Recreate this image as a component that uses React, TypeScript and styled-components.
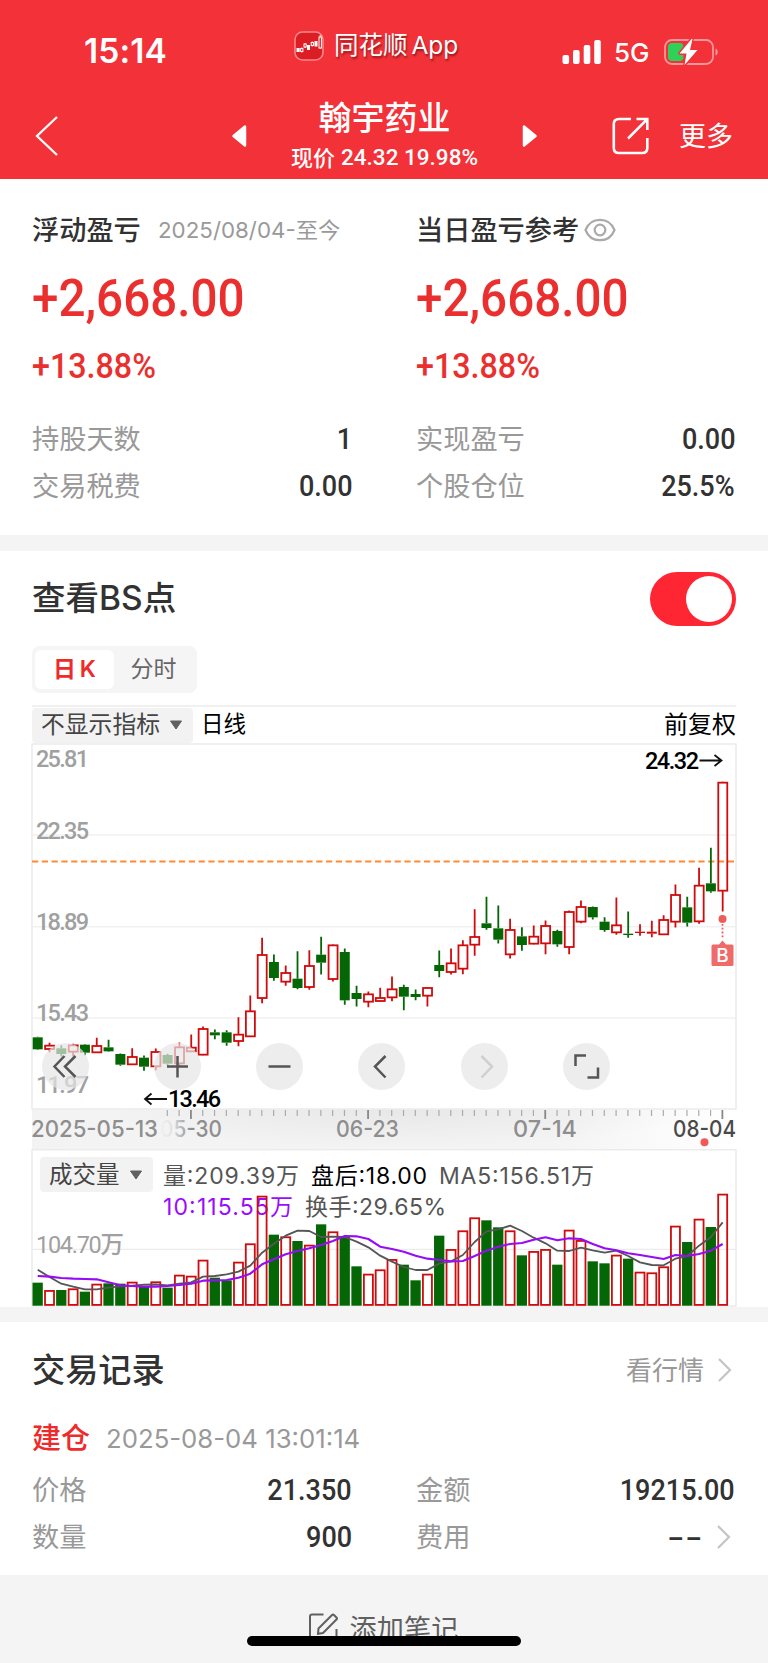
import React from "react";
import styled, { createGlobalStyle } from "styled-components";

const CJK = `"Noto Sans CJK SC", sans-serif`;
const UI = `Inter, "Noto Sans CJK SC", sans-serif`;
const DIN = `Roboto, "Noto Sans CJK SC", sans-serif`;

const RED = "#ea302f";
const UP = "#cf0b0d";
const DOWN = "#046604";

const GlobalStyle = createGlobalStyle`
  * { box-sizing: border-box; }
  body { margin: 0; background: #f4f4f4; font-family: ${CJK}; color: #323232; }
`;

const Screen = styled.main`
  position: relative;
  width: 768px;
  height: 1663px;
  overflow: hidden;
  background: #f4f4f4;
`;

/* ---------- text ---------- */

const Label = styled.span<{ $size: number; $color?: string; $weight?: number; $lift?: number }>`
  font-family: ${CJK};
  font-size: ${(p) => p.$size}px;
  font-weight: ${(p) => p.$weight ?? 400};
  color: ${(p) => p.$color ?? "#999"};
  line-height: 1;
  padding-bottom: ${(p) => p.$lift ?? 2}px;
  white-space: nowrap;
`;

const Num = styled.span<{
  $size: number;
  $color?: string;
  $weight?: number;
  $squeeze?: number;
  $right?: boolean;
  $ui?: boolean;
}>`
  display: inline-block;
  font-family: ${(p) => (p.$ui ? UI : DIN)};
  font-size: ${(p) => p.$size}px;
  font-weight: ${(p) => p.$weight ?? 500};
  color: ${(p) => p.$color ?? "#323232"};
  line-height: 1;
  white-space: nowrap;
  transform: scaleX(${(p) => p.$squeeze ?? 0.915});
  transform-origin: ${(p) => (p.$right ? "right" : "left")} center;
`;

/* ---------- header ---------- */

const Header = styled.header`
  height: 179px;
  background: #f23138;
  color: #fff;
`;

const StatusBar = styled.div`
  display: flex;
  align-items: center;
  height: 90px;
  padding: 13px 48px 0 84px;
`;

const Clock = styled.span`
  font: 600 33.5px/1 ${UI};
  letter-spacing: 0.1px;
  width: 210px;
`;

const AppName = styled.div`
  display: flex;
  align-items: center;
  gap: 10px;
  width: 268px;
  margin-top: -12px;
  font: 400 24.5px/1 ${UI};
  word-spacing: -3px;
  text-shadow: 1px 2px 2px rgba(60, 0, 0, 0.5);
`;

const Network = styled.span`
  font: 450 26px/1 ${UI};
  width: 38px;
  margin: 2px 12px 0 12px;
`;

const NavBar = styled.div`
  display: flex;
  align-items: center;
  height: 89px;
  padding: 2px 35px 0 34px;
`;

const Back = styled.div`
  width: 197px;
  display: flex;
`;

const TitleBlock = styled.div`
  width: 275px;
  height: 89px;
  display: flex;
  flex-direction: column;
  align-items: center;
  padding-top: 5px;
`;

const TitleName = styled.h1`
  margin: 0;
  font: 500 33px/40px ${CJK};
`;

const Quote = styled.div`
  display: flex;
  align-items: center;
  height: 42px;
  gap: 6px;
`;

const NavActions = styled.div`
  flex: 1;
  display: flex;
  align-items: center;
  justify-content: flex-end;
  gap: 30px;
`;

/* ---------- shared sections ---------- */

const Panel = styled.section<{ $h: number }>`
  height: ${(p) => p.$h}px;
  background: #fff;
`;

const Gap = styled.div<{ $h: number }>`
  height: ${(p) => p.$h}px;
  background: #f4f4f4;
`;

const Columns = styled.div<{ $top: number }>`
  display: grid;
  grid-template-columns: 320px 319px;
  column-gap: 64px;
  padding: ${(p) => p.$top}px 32px 0;
`;

const Line = styled.div<{ $h: number; $gap?: number; $between?: boolean; $drop?: number }>`
  display: flex;
  align-items: center;
  height: ${(p) => p.$h}px;
  padding-top: ${(p) => p.$drop ?? 0}px;
  gap: ${(p) => p.$gap ?? 0}px;
  justify-content: ${(p) => (p.$between ? "space-between" : "flex-start")};
`;

const Padded = styled.div<{ $top?: number }>`
  padding: ${(p) => p.$top ?? 0}px 32px 0;
`;

const Trailing = styled.span`
  display: inline-flex;
  align-items: center;
  gap: 11px;
  margin-right: 3px;
`;

/* ---------- chart panel ---------- */

const Toggle = styled.div`
  width: 86px;
  height: 54px;
  padding: 4px;
  border-radius: 27px;
  background: #ff2634;
  display: flex;
  justify-content: flex-end;
  &::after {
    content: "";
    width: 46px;
    height: 46px;
    border-radius: 50%;
    background: #fff;
  }
`;

const Tabs = styled.div`
  display: inline-flex;
  width: 165px;
  height: 47px;
  padding: 4px 3px;
  border-radius: 8px;
  background: #f5f5f5;
`;

const Tab = styled.div<{ $active?: boolean }>`
  width: ${(p) => (p.$active ? 79 : 79)}px;
  display: flex;
  align-items: center;
  justify-content: center;
  border-radius: 6px;
  word-spacing: -2px;
  font: ${(p) => (p.$active ? 600 : 400)} 23px/1 ${UI};
  color: ${(p) => (p.$active ? "#ee2a2a" : "#666")};
  background: ${(p) => (p.$active ? "#fff" : "transparent")};
`;

const IndicatorRow = styled.div`
  display: flex;
  align-items: center;
  height: 38px;
  margin: 12px 32px 0;
  border-top: 2px solid #f0f0f0;
`;

const LineName = styled.div`
  flex: 1;
  display: flex;
  margin-left: 8px;
`;

const Picker = styled.div<{ $w: number }>`
  display: flex;
  align-items: center;
  justify-content: space-between;
  width: ${(p) => p.$w}px;
  height: 35px;
  padding: 0 10px 0 9px;
  border-radius: 4px;
  background: #f2f2f2;
`;

const Stage = styled.div`
  position: relative;
  svg {
    display: block;
  }
`;

const Controls = styled.div`
  position: absolute;
  left: 41.500px;
  top: 300px;
  display: flex;
  gap: 55.3px;
`;

const Round = styled.div`
  width: 47px;
  height: 47px;
  border-radius: 50%;
  background: rgba(229, 229, 229, 0.7);
  display: flex;
  align-items: center;
  justify-content: center;
  &:first-child {
    margin-right: 10px;
  }
`;

const VolumePicker = styled.div`
  position: absolute;
  left: 40px;
  top: 8px;
`;

/* ---------- footer ---------- */

const Footer = styled.footer`
  display: flex;
  justify-content: center;
  align-items: center;
  gap: 10px;
  height: 88px;
  padding: 20px 2px 0 0;
`;

const HomeBar = styled.div`
  position: absolute;
  left: 247px;
  top: 1636px;
  width: 274px;
  height: 10px;
  border-radius: 5px;
  background: #000;
`;

/* ---------- data ---------- */

type Candle = ["r" | "g", number, number, number, number];

/* colour, high, body top, body bottom, low: thirds of a pixel below the plot's y=900 */
const candles: Candle[] = [
  ["g", 412, 412, 448, 448], ["r", 430, 437, 447, 455], ["g", 437, 445, 462, 468], ["r", 433, 436, 455, 468],
  ["g", 434, 434, 458, 464], ["r", 415, 438, 457, 457], ["g", 421, 442, 454, 454], ["g", 462, 462, 494, 496],
  ["r", 446, 471, 493, 493], ["g", 468, 473, 500, 511], ["r", 447, 456, 499, 509], ["g", 463, 465, 491, 495],
  ["r", 429, 442, 490, 496], ["r", 405, 443, 454, 454], ["r", 381, 387, 464, 464], ["g", 390, 397, 406, 416],
  ["g", 392, 397, 428, 436], ["r", 353, 404, 423, 437], ["r", 288, 334, 409, 409], ["r", 115, 165, 294, 308],
  ["g", 165, 186, 234, 241], ["r", 198, 219, 245, 256], ["g", 155, 236, 264, 266], ["r", 152, 198, 261, 268],
  ["g", 112, 164, 188, 222], ["r", 135, 136, 237, 243], ["g", 147, 156, 301, 313], ["g", 259, 279, 297, 318],
  ["r", 276, 283, 305, 320], ["r", 265, 294, 303, 303], ["r", 231, 268, 292, 302], ["g", 256, 261, 290, 329],
  ["g", 270, 282, 291, 299], ["r", 264, 264, 287, 318], ["g", 153, 195, 213, 230], ["r", 147, 190, 216, 222],
  ["r", 122, 136, 206, 221], ["r", 29, 111, 134, 166], ["g", -8, 70, 84, 88], ["g", 18, 85, 119, 129],
  ["r", 58, 90, 163, 174], ["g", 83, 109, 135, 151], ["r", 78, 110, 131, 131], ["r", 63, 78, 130, 161],
  ["g", 91, 93, 133, 139], ["r", 33, 36, 141, 161], ["r", 3, 21, 65, 68], ["g", 21, 21, 52, 57],
  ["g", 53, 65, 90, 94], ["r", -6, 76, 97, 103], ["g", 36, 101, 105, 112], ["r", 74, 95, 99, 106],
  ["r", 64, 95, 101, 110], ["r", 47, 60, 103, 103], ["r", -45, -15, 65, 81], ["g", -8, 22, 68, 78],
  ["r", -95, -43, 64, 70], ["g", -155, -50, -26, -23], ["r", -353, -352, -28, 33],
];

const volumes = [
  428, 451, 450, 446, 455, 432, 430, 431, 426, 441, 425, 443, 405, 408, 360, 413, 421, 366, 311, 168,
  284, 290, 303, 315, 253, 275, 291, 379, 402, 389, 358, 374, 421, 402, 287, 328, 272, 233, 241, 262,
  272, 346, 334, 328, 374, 270, 301, 364, 370, 345, 356, 396, 398, 380, 258, 306, 237, 261, 162,
];

const ma5 = [
  389, 411, 431, 440, 448, 448, 443, 439, 437, 434, 433, 436, 431, 427, 410, 408, 403, 395, 377, 338,
  311, 287, 272, 273, 291, 290, 291, 305, 322, 347, 365, 381, 390, 390, 371, 364, 345, 306, 274, 268,
  257, 273, 293, 310, 332, 333, 323, 331, 338, 332, 348, 367, 375, 376, 356, 348, 317, 291, 247,
];

const ma10 = [
  408, 410, 414, 416, 417, 418, 427, 436, 438, 440, 440, 438, 435, 431, 422, 421, 420, 413, 401, 373,
  358, 343, 333, 325, 315, 303, 288, 289, 297, 320, 327, 335, 347, 356, 360, 364, 363, 348, 332, 320,
  312, 309, 299, 292, 301, 295, 297, 312, 325, 331, 340, 345, 351, 357, 345, 348, 342, 332, 312,
];

const cx = (i: number) => 37.7 + 11.81 * i;
const BODY = 10;

/* ---------- small drawings ---------- */

const Caret = () => (
  <svg width="14" height="10" viewBox="0 0 14 10">
    <path d="M1.5 1h11L7 9z" fill="#606060" stroke="#606060" strokeLinejoin="round" />
  </svg>
);

const Chevron = () => (
  <svg width="18" height="26" viewBox="0 0 18 26">
    <path d="M4 2 15 13 4 24" fill="none" stroke="#c4c4c4" strokeWidth="2.2" />
  </svg>
);

const AppIcon = () => (
  <svg width="30" height="30" viewBox="0 0 30 30">
    <rect x="1" y="1" width="28" height="28" rx="7.5" fill="#dd1d24" stroke="#f8888b" strokeWidth="1.6" />
    <g fill="#fff">
      <rect x="2.5" y="17" width="3.2" height="4" />
      <rect x="13" y="14" width="3" height="5" />
      <rect x="20.5" y="10" width="3" height="5.5" />
    </g>
    <g fill="none" stroke="#fff">
      <path d="M7.8 16.5v5M11 12v5M18.2 10.5v5M26.2 4v14" />
      <rect x="6.7" y="17.5" width="2.2" height="3" fill="#dd1d24" />
      <rect x="10" y="13" width="2.2" height="3" fill="#dd1d24" />
      <rect x="17.2" y="11.5" width="2.2" height="3" fill="#dd1d24" />
      <rect x="25" y="6" width="2.4" height="11" fill="#dd1d24" />
    </g>
  </svg>
);

const Signal = () => (
  <svg width="40" height="26" viewBox="0 0 40 26" fill="#fff">
    <rect x="0.5" y="16" width="6.6" height="9" rx="2" />
    <rect x="11" y="11" width="6.6" height="14" rx="2" />
    <rect x="21.7" y="6" width="6.6" height="19" rx="2" />
    <rect x="32.2" y="1" width="6.6" height="24" rx="2" />
  </svg>
);

const Battery = () => (
  <svg width="56" height="28" viewBox="0 0 56 28">
    <rect x="1" y="2" width="48" height="24" rx="7" fill="none" stroke="#f9989b" strokeWidth="1.8" />
    <path d="M51.5 10.5c3 1 3 6 0 7z" fill="#f9989b" />
    <rect x="4" y="5" width="15.5" height="18" rx="4" fill="#30d158" />
    <path
      d="M27.5 1 15.500 15.500h7L20.500 27 33.500 12h-7.500L28.500 1z"
      fill="#fff" stroke="#f23138" strokeWidth="2.800" strokeLinejoin="round" paintOrder="stroke"
    />
  </svg>
);

const Eye = () => (
  <svg width="32" height="24" viewBox="0 0 32 24" fill="none" stroke="#aaa" strokeWidth="2.200">
    <path d="M1.500 12C4 5.500 9.500 1.800 16 1.800S28 5.500 30.500 12C28 18.500 22.500 22.200 16 22.200S4 18.500 1.500 12z" />
    <circle cx="16" cy="12" r="5.300" />
  </svg>
);

const Share = () => (
  <svg width="37" height="38" viewBox="0 0 37 38" fill="none" stroke="#fff" strokeWidth="2.600">
    <path d="M19 2H7Q1.800 2 1.800 7v24q0 5 5 5h23.500q5 0 5-5V21M24.500 2h10.800v11M35 2.300 16 21.500" />
  </svg>
);

const Note = () => (
  <svg width="32" height="34" viewBox="0 0 32 34" fill="none" stroke="#606060" strokeWidth="2">
    <path d="M15.500 2.500H4Q2 2.500 2 4.500V30q0 2 2 2h22.500q2 0 2-2V17" />
    <path d="M10.500 16.500 24.300 2.800q.7-.7 1.400 0l3 3q.7.7 0 1.400L15 21l-5 .8z" />
  </svg>
);

const Icon = ({ d, color = "#555" }: { d: string; color?: string }) => (
  <svg width="47" height="47" viewBox="0 0 47 47" fill="none" stroke={color} strokeWidth="2.500">
    <path d={d} />
  </svg>
);

/* ---------- charts ---------- */

type MarkProps = {
  x: number; y: number; len: number; children: string;
  size?: number; fill?: string; weight?: number; family?: string; squeeze?: boolean;
};

const Mark = ({ x, y, len, children, size = 23.5, fill = "#999", weight = 400, family = DIN, squeeze }: MarkProps) => (
  <text
    x={x} y={y} textLength={len} lengthAdjust={squeeze ? "spacingAndGlyphs" : "spacing"}
    fontFamily={family} fontSize={size} fontWeight={weight} fill={fill}
  >
    {children}
  </text>
);

const prices: [string, number][] = [
  ["25.81", 767], ["22.35", 838.5], ["18.89", 930], ["15.43", 1021], ["11.97", 1093],
];

const PriceChart = () => (
  <svg width="768" height="406" viewBox="0 743 768 406">
    <defs>
      <linearGradient id="axisFade">
        <stop offset="0" stopColor="#f3f3f3" />
        <stop offset="0.75" stopColor="#f4f4f4" />
        <stop offset="1" stopColor="#fff" />
      </linearGradient>
      <radialGradient id="axisShade" cx="0.5" cy="0" r="0.5" gradientTransform="translate(0 0) scale(1 2)">
        <stop offset="0" stopColor="#000" stopOpacity="0.05" />
        <stop offset="1" stopColor="#000" stopOpacity="0" />
      </radialGradient>
      <linearGradient id="dateFade">
        <stop offset="0" stopColor="#f3f3f3" />
        <stop offset="0.4" stopColor="#f3f3f3" stopOpacity="0.85" />
        <stop offset="1" stopColor="#f3f3f3" stopOpacity="0" />
      </linearGradient>
    </defs>
    <rect x="32" y="1109" width="704" height="40" fill="url(#axisFade)" />
    <rect x="100" y="1109" width="600" height="40" fill="url(#axisShade)" />
    {[835, 926.7, 1018].map((y) => (
      <path key={y} d={`M32 ${y}H736`} stroke="#f1f1f1" strokeWidth="1.500" />
    ))}
    <rect x="32" y="744" width="704" height="365" fill="none" stroke="#ebebeb" strokeWidth="1.500" />
    <path d="M32 861.500H736" stroke="#ff8a33" strokeWidth="2" strokeDasharray="6.200 3.600" />
    {prices.map(([t, y]) => (
      <Mark key={t} x={36} y={y} len={53} weight={500} fill="#a0a0a0">{t}</Mark>
    ))}
    {candles.map(([c, h, t, b, l], i) => {
      const x = cx(i);
      const [hi, top, bot, lo] = [h, t, b, l].map((v) => 900 + v / 3);
      const col = c === "r" ? UP : DOWN;
      const thin = bot - top < 2.5;
      return (
        <g key={i} stroke={col} strokeWidth="1.800">
          <path d={`M${x} ${hi - 0.5}V${top}M${x} ${bot}V${lo + 0.5}`} />
          {c === "g" || thin ? (
            <rect x={x - BODY / 2} y={top} width={BODY} height={Math.max(bot - top, 1.2)} fill={col} stroke="none" />
          ) : (
            <rect x={x - BODY / 2 + 0.6} y={top} width={BODY - 1} height={bot - top} fill="none" />
          )}
        </g>
      );
    })}
    <Mark x={645} y={769} len={54} fill="#000" weight={500}>24.32</Mark>
    <path d="M699.500 760.500H721M714.500 755l7 5.500-7 5.500" fill="none" stroke="#111" strokeWidth="1.800" />
    <Mark x={168} y={1107} len={53} fill="#000" weight={500}>13.46</Mark>
    <path d="M167 1099H145.500M151.500 1093.500l-6.500 5.500 6.500 5.500" fill="none" stroke="#111" strokeWidth="1.800" />
    <circle cx="722.500" cy="919" r="4" fill="#ee5b5b" />
    <path d="M722.500 924V938" stroke="#ee5b5b" strokeWidth="1.800" strokeDasharray="1.800 2" />
    <path d="M713 944.500h6l3.500-4 3.500 4h6q1.500 0 1.500 1.500v18.500q0 1.500-1.500 1.500h-19q-1.500 0-1.500-1.500V946q0-1.500 1.500-1.500z" fill="#f06a6a" />
    <text x="722.500" y="961.800" textAnchor="middle" fontFamily={UI} fontSize="19" fontWeight="500" fill="#fff">B</text>
    {candles.map((_, i) =>
      i < 11 ? null : (
        <path
          key={i}
          d={`M${cx(i) - 0.3} 1110v${[13, 28, 43, 58].includes(i) ? 9 : 6}`}
          stroke={[13, 28, 43, 58].includes(i) ? "#888" : "#aaa"}
          strokeWidth={[13, 28, 43, 58].includes(i) ? 1.8 : 1.2}
        />
      ),
    )}
    <Mark x={31} y={1136.5} len={127} family={UI} size={23} weight={500} fill="#8e8e8e" squeeze>2025-05-13</Mark>
    <Mark x={160} y={1136.5} len={62} family={UI} size={23} weight={500} fill="#8e8e8e" squeeze>05-30</Mark>
    <rect x="158" y="1118" width="33" height="30" fill="url(#dateFade)" />
    <Mark x={336} y={1136.5} len={63} family={UI} size={23} weight={500} fill="#8e8e8e" squeeze>06-23</Mark>
    <Mark x={513} y={1136.5} len={64} family={UI} size={23} weight={500} fill="#8e8e8e" squeeze>07-14</Mark>
    <Mark x={673} y={1136.5} len={63} family={UI} size={23} weight={500} fill="#4a4a4a" squeeze>08-04</Mark>
    <circle cx="704.500" cy="1142.300" r="4" fill="#f25a5a" />
  </svg>
);

const line = (v: number[]) => v.map((y, i) => `${i ? "L" : "M"}${cx(i)} ${1140 + y / 3}`).join("");

const VolumeChart = () => (
  <svg width="768" height="158" viewBox="0 1149 768 158">
    <rect x="32" y="1149.700" width="704" height="156.300" fill="none" stroke="#ebebeb" strokeWidth="1.500" />
    <path d="M32 1249.300H736" stroke="#ececec" strokeWidth="1.200" />
    <Mark x={36} y={1252.5} len={88} weight={450} fill="#a0a0a0">104.70万</Mark>
    <Mark x={163} y={1184} len={136} family={UI} size={23} fill="#555">量:209.39万</Mark>
    <Mark x={311} y={1184} len={116} family={UI} size={23} fill="#000">盘后:18.00</Mark>
    <Mark x={439} y={1184} len={155} family={UI} size={23} fill="#555">MA5:156.51万</Mark>
    <Mark x={163} y={1215} len={130} family={UI} size={23} fill="#9a0cff">10:115.55万</Mark>
    <Mark x={305} y={1215} len={141} family={UI} size={23} fill="#555">换手:29.65%</Mark>
    {volumes.map((v, i) => {
      const y = 1140 + v / 3;
      return candles[i][0] === "g" ? (
        <rect key={i} x={cx(i) - 5.2} y={y} width="10.300" height={1305.7 - y} fill={DOWN} />
      ) : (
        <rect
          key={i} x={cx(i) - 4.5} y={y + 0.6} width="9" height={1304.3 - y}
          fill="none" stroke={UP} strokeWidth="1.800"
        />
      );
    })}
    <path d={line(ma5)} fill="none" stroke="#555" strokeWidth="1.800" strokeLinejoin="round" />
    <path d={line(ma10)} fill="none" stroke="#960cf5" strokeWidth="2.100" strokeLinejoin="round" />
  </svg>
);

/* ---------- page ---------- */

const Field = ({ label, value, arrow }: { label: string; value: string; arrow?: boolean }) => (
  <Line $h={47} $between>
    <Label $size={27.2}>{label}</Label>
    {arrow ? (
      <Trailing>
        <Num $size={30} $ui $squeeze={1.3} $right>{value}</Num>
        <Chevron />
      </Trailing>
    ) : (
      <Num $size={30} $right $squeeze={0.9}>{value}</Num>
    )}
  </Line>
);

export default function App() {
  return (
    <Screen>
      <GlobalStyle />
      <Header>
        <StatusBar>
          <Clock>15:14</Clock>
          <AppName>
            <AppIcon />
            同花顺 App
          </AppName>
          <Signal />
          <Network>5G</Network>
          <Battery />
        </StatusBar>
        <NavBar>
          <Back>
            <svg width="26" height="42" viewBox="0 0 26 42">
              <path d="M23 2 3 21l20 19" fill="none" stroke="#fff" strokeWidth="2.300" />
            </svg>
          </Back>
          <svg width="16" height="24" viewBox="0 0 16 24">
            <path d="M14 2.500v19L2.500 12z" fill="#fff" stroke="#fff" strokeWidth="2.500" strokeLinejoin="round" />
          </svg>
          <TitleBlock>
            <TitleName>翰宇药业</TitleName>
            <Quote>
              <Label $size={22} $color="#fff" $weight={500} $lift={3}>现价</Label>
              <Num $size={22.5} $color="#fff" $squeeze={1}>24.32 19.98%</Num>
            </Quote>
          </TitleBlock>
          <svg width="16" height="24" viewBox="0 0 16 24">
            <path d="M2 2.500v19L13.500 12z" fill="#fff" stroke="#fff" strokeWidth="2.500" strokeLinejoin="round" />
          </svg>
          <NavActions>
            <Share />
            <Label $size={27} $color="#fff">更多</Label>
          </NavActions>
        </NavBar>
      </Header>

      <Panel $h={356}>
        <Columns $top={26}>
          <div>
            <Line $h={50} $gap={17}>
              <Label $size={27.2} $weight={500} $color="#323232" $lift={3}>浮动盈亏</Label>
              <Num $ui $size={22} $weight={400} $color="#999" $squeeze={1.015}>2025/08/04-至今</Num>
            </Line>
            <Line $h={86} $drop={2}><Num $size={52} $color={RED}>+2,668.00</Num></Line>
            <Line $h={50}><Num $size={34.5} $color={RED} $squeeze={0.935}>+13.88%</Num></Line>
          </div>
          <div>
            <Line $h={50} $gap={5}>
              <Label $size={27.2} $weight={500} $color="#323232" $lift={3}>当日盈亏参考</Label>
              <Eye />
            </Line>
            <Line $h={86} $drop={2}><Num $size={52} $color={RED}>+2,668.00</Num></Line>
            <Line $h={50}><Num $size={34.5} $color={RED} $squeeze={0.935}>+13.88%</Num></Line>
          </div>
        </Columns>
        <Columns $top={24}>
          <Field label="持股天数" value="1" />
          <Field label="实现盈亏" value="0.00" />
          <Field label="交易税费" value="0.00" />
          <Field label="个股仓位" value="25.5%" />
        </Columns>
      </Panel>
      <Gap $h={16} />

      <Panel $h={756}>
        <Padded $top={20.5}>
          <Line $h={54} $between>
            <Num $ui $size={33.5} $squeeze={1}>查看BS点</Num>
            <Toggle />
          </Line>
        </Padded>
        <Padded $top={19.5}>
          <Line $h={48}>
            <Tabs>
              <Tab $active>日 K</Tab>
              <Tab>分时</Tab>
            </Tabs>
          </Line>
        </Padded>
        <IndicatorRow>
          <Picker $w={161}>
            <Label $size={23.8} $color="#444" $lift={4}>不显示指标</Label>
            <Caret />
          </Picker>
          <LineName>
            <Label $size={22.5} $color="#000" $lift={5}>日线</Label>
          </LineName>
          <Label $size={24} $color="#000" $lift={5}>前复权</Label>
        </IndicatorRow>
        <Stage>
          <PriceChart />
          <Controls>
            <Round><Icon d="M22.500 13 12.500 23.500l10 10.500M33.500 13 23 23.500 33.500 34" /></Round>
            <Round><Icon d="M23.500 13v21.500M13 23.500h21" /></Round>
            <Round><Icon d="M12.500 23.500h22" /></Round>
            <Round><Icon d="M27.500 13 17 23.500 27.500 34.500" /></Round>
            <Round><Icon color="#cfcfcf" d="M20.500 13 31 23.500 20.500 34.500" /></Round>
            <Round><Icon d="M23 12.500H12.500V23M24.500 34.500H35V24.500" /></Round>
          </Controls>
        </Stage>
        <Stage>
          <VolumeChart />
          <VolumePicker>
            <Picker $w={113}>
              <Label $size={23.5} $color="#444">成交量</Label>
              <Caret />
            </Picker>
          </VolumePicker>
        </Stage>
      </Panel>
      <Gap $h={15} />

      <Panel $h={253}>
        <Padded $top={22}>
          <Line $h={52} $between>
            <Label $size={33.2} $weight={500} $color="#323232" $lift={5}>交易记录</Label>
            <Trailing>
              <Label $size={26}>看行情</Label>
              <Chevron />
            </Trailing>
          </Line>
        </Padded>
        <Padded $top={16}>
          <Line $h={53} $gap={16}>
            <Label $size={29} $weight={500} $color="#ee2a2a" $lift={4}>建仓</Label>
            <Num $ui $size={26} $weight={400} $color="#999" $squeeze={0.99}>2025-08-04 13:01:14</Num>
          </Line>
        </Padded>
        <Columns $top={1}>
          <Field label="价格" value="21.350" />
          <Field label="金额" value="19215.00" />
          <Field label="数量" value="900" />
          <Field label="费用" value="--" arrow />
        </Columns>
      </Panel>

      <Footer>
        <Note />
        <Label $size={27.2} $color="#606060">添加笔记</Label>
      </Footer>
      <HomeBar />
    </Screen>
  );
}
